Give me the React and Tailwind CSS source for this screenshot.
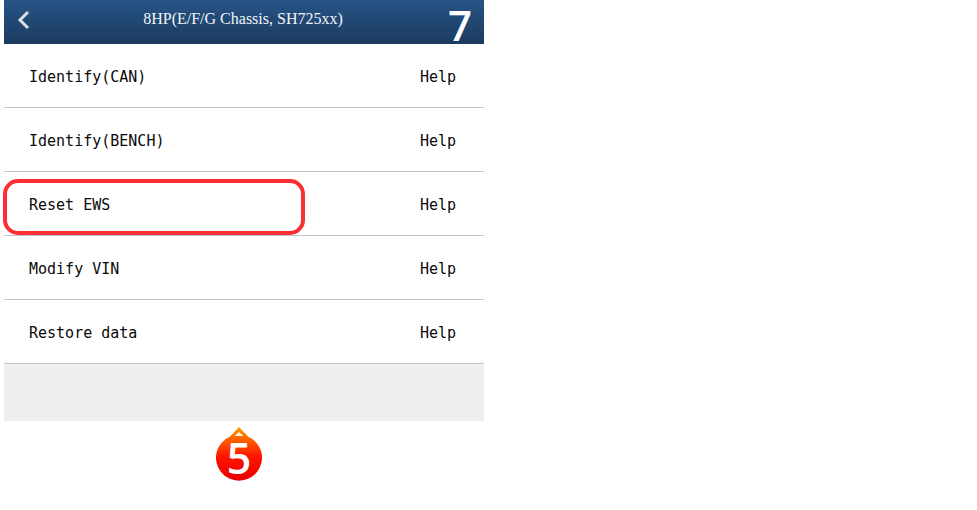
const rows = ["Identify(CAN)", "Identify(BENCH)", "Reset EWS", "Modify VIN", "Restore data"];

function Row({ label, highlighted }) {
  return (
    <div className="relative flex h-16 items-center justify-between border-b border-[#c4c4c4] pl-[25px] pr-[28px] pt-[3px] font-['DejaVu_Sans_Mono','Liberation_Mono',monospace] text-[15px] text-[#0a0a0a]">
      <span>{label}</span>
      <span>Help</span>
      {highlighted && (
        <div className="absolute left-[-1px] top-[7px] h-[56px] w-[302px] rounded-[15px] border-[4px] border-[#fb2e33]" />
      )}
    </div>
  );
}

export default function App() {
  return (
    <div className="h-[510px] w-[977px] bg-white pl-1">
      <div className="w-[480px]">
        <header className="relative flex h-11 items-center justify-center bg-gradient-to-b from-[#265587] to-[#1c3a60] font-['Liberation_Serif',serif] text-[16px] text-[#f2f4f7]">
          <svg className="absolute left-[13px] top-[10px]" width="14" height="20" viewBox="0 0 14 20" fill="none">
            <path d="M11 2 L3 10 L11 18" stroke="#d9dfe6" strokeWidth="3" />
          </svg>
          <span className="pb-[6px] pr-[2px]">8HP(E/F/G Chassis, SH725xx)</span>
          <span className="absolute right-[12px] top-[6px] font-['Open_Sans',sans-serif] text-[42px] font-semibold leading-[38px] text-white">7</span>
        </header>
        {rows.map((r) => (
          <Row key={r} label={r} highlighted={r === "Reset EWS"} />
        ))}
        <div className="h-[57px] bg-[#efefef]" />
        <div className="flex justify-center pt-[6px] pr-[10px]">
          <div className="relative h-[56px] w-[46px]">
            <svg width="46" height="56" viewBox="0 0 46 56">
              <defs>
                <linearGradient id="drop" x1="0" y1="0" x2="0" y2="1">
                  <stop offset="0" stopColor="#ff9a00" />
                  <stop offset="0.55" stopColor="#ff1400" />
                  <stop offset="1" stopColor="#e80000" />
                </linearGradient>
              </defs>
              <path d="M23 0 L32 9.5 A23 23 0 1 1 14 9.5 Z" fill="url(#drop)" />
              <path d="M23 5 L27.5 9 L18.5 9 Z" fill="#fff2d8" />
            </svg>
            <span className="absolute inset-x-0 top-[8px] text-center font-['Open_Sans',sans-serif] text-[43px] font-semibold leading-[46px] text-white">5</span>
          </div>
        </div>
      </div>
    </div>
  );
}
